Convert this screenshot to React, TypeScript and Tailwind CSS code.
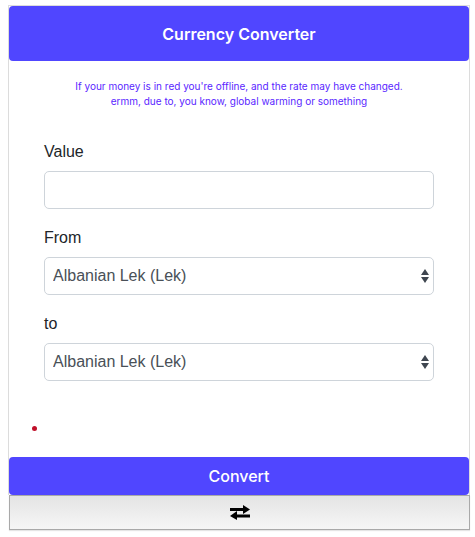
import { useState } from 'react';

const CURRENCIES = ['Albanian Lek (Lek)', 'Euro (€)', 'US Dollar ($)'];

function SwapIcon() {
  return (
    <svg width="22" height="15" viewBox="0 0 22 15" fill="black">
      <rect x="1" y="3" width="15" height="3" />
      <polygon points="14,0 21,4.5 14,9" />
      <rect x="6" y="9.5" width="15" height="3" />
      <polygon points="8,6 1,11 8,15" />
    </svg>
  );
}

function SelectBox({ value, onChange }: { value: string; onChange: (v: string) => void }) {
  return (
    <div className="relative">
      <select
        value={value}
        onChange={e => onChange(e.target.value)}
        className="w-full h-[38px] appearance-none rounded-[5px] border border-[#ced4da] bg-white pl-2 pr-8 text-[16px] text-[#495057] outline-none"
      >
        {CURRENCIES.map(c => (
          <option key={c}>{c}</option>
        ))}
      </select>
      <svg className="pointer-events-none absolute right-[4px] top-[11px]" width="10" height="16" viewBox="0 0 10 16" fill="#3f4650">
        <polygon points="5,1 9,7 1,7" />
        <polygon points="1,9 9,9 5,15" />
      </svg>
    </div>
  );
}

export default function App() {
  const [amount, setAmount] = useState('');
  const [from, setFrom] = useState(CURRENCIES[0]);
  const [to, setTo] = useState(CURRENCIES[0]);

  return (
    <div className="w-[475px] h-[537px] bg-white pt-[5px] pl-[8px] font-['Liberation_Sans',Helvetica,Arial,sans-serif]">
      <div className="w-[462px] border border-[#dcdcdc] border-b-0">
        {/* Header */}
        <div className="h-[55px] rounded-[4px] bg-[#5046ff] flex items-center justify-center">
          <h1 className="text-white text-[16px] font-semibold font-['Inter',sans-serif]">Currency Converter</h1>
        </div>

        {/* Notice */}
        <p className="mt-[18px] text-center text-[10px] leading-[15px] text-[#5a1fff] font-['Inter',sans-serif]">
          If your money is in red you're offline, and the rate may have changed.
          <br />
          ermm, due to, you know, global warming or something
        </p>

        {/* Form */}
        <div className="px-[35px] pt-[33px]">
          <label className="block text-[16px] text-[#212529] leading-[20px] mb-[9px]">Value</label>
          <input
            value={amount}
            onChange={e => setAmount(e.target.value)}
            className="w-full h-[38px] rounded-[5px] border border-[#ced4da] bg-white px-2 text-[16px] outline-none"
          />

          <label className="block text-[16px] text-[#212529] leading-[20px] mt-[19px] mb-[9px]">From</label>
          <SelectBox value={from} onChange={setFrom} />

          <label className="block text-[16px] text-[#212529] leading-[20px] mt-[19px] mb-[9px]">to</label>
          <SelectBox value={to} onChange={setTo} />
        </div>

        {/* Status dot */}
        <div className="h-[76px] pl-[23px] pt-[45px]">
          <div className="w-[5px] h-[5px] rounded-full bg-[#c0102a]" />
        </div>

        <button className="block w-full h-[38px] rounded-[4px] bg-[#5046ff] text-white text-[16px] font-medium font-['Inter',sans-serif]">Convert</button>
      </div>
      <button className="flex w-[461px] ml-[1px] h-[35px] items-center justify-center border border-[#a9a9a9] bg-gradient-to-b from-[#e4e4e4] to-[#f6f6f6] shadow-[0_1px_1px_rgba(0,0,0,0.1)]">
        <SwapIcon />
      </button>
    </div>
  );
}
